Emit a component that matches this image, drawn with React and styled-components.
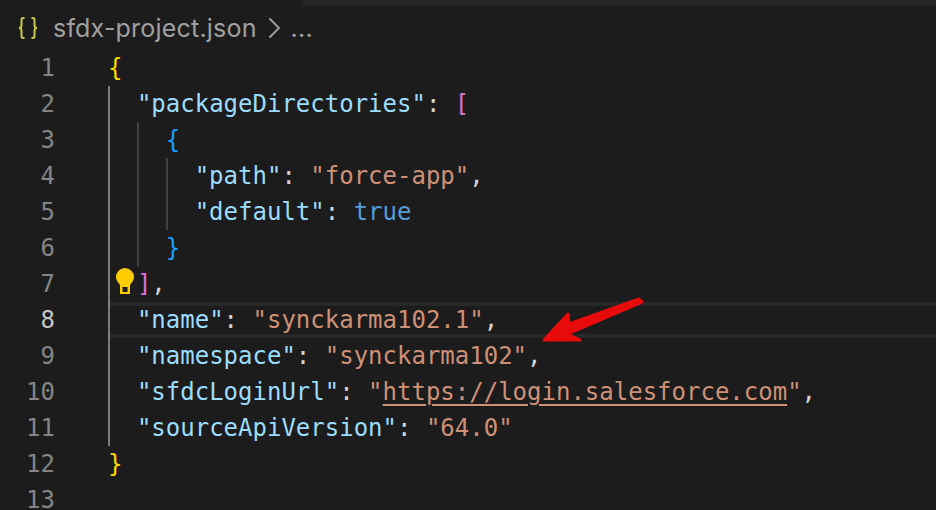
import styled, { createGlobalStyle } from "styled-components";

const GlobalStyle = createGlobalStyle`
  html, body {
    margin: 0;
    padding: 0;
    background: #1c1c1c;
  }
`;

const Editor = styled.div`
  position: relative;
  width: 936px;
  height: 510px;
  overflow: hidden;
  background: #1c1c1c;
`;

const TopStrip = styled.div`
  height: 6px;
  margin-left: 302px;
  background: #252525;
`;

const Breadcrumbs = styled.div`
  height: 44px;
  display: flex;
  align-items: center;
  padding-left: 17px;
  box-sizing: border-box;
  font-family: "Inter", "Liberation Sans", sans-serif;
  font-size: 25px;
  letter-spacing: 0.2px;
  color: #a0a0a0;
`;

const FileIcon = styled.svg`
  width: 22px;
  height: 24px;
  margin-right: 14px;
  flex: none;
`;

const Chevron = styled.svg`
  width: 13px;
  height: 22px;
  margin: 0 10px 0 11px;
  flex: none;
`;

const CodeArea = styled.div`
  font-family: "DejaVu Sans Mono", monospace;
  font-size: 24px;
  color: #d4d4d4;
`;

const Row = styled.div`
  display: flex;
  height: 36px;
  line-height: 36px;
  white-space: pre;
`;

const LineNumber = styled.div`
  width: 55px;
  margin-right: 53px;
  flex: none;
  text-align: right;
  color: ${(p) => (p.$active ? "#c6c6c6" : "#858585")};
`;

const Content = styled.div`
  position: relative;
  flex: 1;
  display: flex;
  box-sizing: border-box;
  ${(p) => p.$active && "box-shadow: inset 0 4px 0 #282828, inset 0 -4px 0 #282828;"}
`;

const Guide = styled.span`
  width: 28.9px;
  height: 36px;
  flex: none;
  box-sizing: border-box;
  border-left: 2px solid ${(p) => (p.$strong ? "#7c7c7c" : "#414141")};
`;

const Key = styled.span`
  color: #9cdcfe;
`;
const Str = styled.span`
  color: #ce9178;
`;
const Link = styled.span`
  text-decoration: underline;
  text-decoration-thickness: 2px;
  text-underline-offset: 4px;
`;
const Bool = styled.span`
  color: #569cd6;
`;
const Bracket = styled.span`
  color: ${(p) => p.$color};
`;

const Bulb = styled.svg`
  position: absolute;
  left: 8px;
  top: 2px;
  width: 18px;
  height: 26px;
`;

const Arrow = styled.svg`
  position: absolute;
  left: 535px;
  top: 292px;
  width: 115px;
  height: 56px;
`;

const Gold = "#ffd700";
const Blue = "#179fff";
const Orchid = "#da70d6";

const lines = [
  { guides: 0, body: <Bracket $color={Gold}>{"{"}</Bracket> },
  {
    guides: 1,
    body: (
      <>
        <Key>"packageDirectories"</Key>: <Bracket $color={Orchid}>[</Bracket>
      </>
    ),
  },
  { guides: 2, body: <Bracket $color={Blue}>{"{"}</Bracket> },
  {
    guides: 3,
    body: (
      <>
        <Key>"path"</Key>: <Str>"force-app"</Str>,
      </>
    ),
  },
  {
    guides: 3,
    body: (
      <>
        <Key>"default"</Key>: <Bool>true</Bool>
      </>
    ),
  },
  { guides: 2, body: <Bracket $color={Blue}>{"}"}</Bracket> },
  {
    guides: 1,
    bulb: true,
    body: (
      <>
        <Bracket $color={Orchid}>]</Bracket>,
      </>
    ),
  },
  {
    guides: 1,
    active: true,
    body: (
      <>
        <Key>"name"</Key>: <Str>"synckarma102.1"</Str>,
      </>
    ),
  },
  {
    guides: 1,
    body: (
      <>
        <Key>"namespace"</Key>: <Str>"synckarma102"</Str>,
      </>
    ),
  },
  {
    guides: 1,
    body: (
      <>
        <Key>"sfdcLoginUrl"</Key>:{" "}
        <Str>
          "<Link>https://login.salesforce.com</Link>"
        </Str>
        ,
      </>
    ),
  },
  {
    guides: 1,
    body: (
      <>
        <Key>"sourceApiVersion"</Key>: <Str>"64.0"</Str>
      </>
    ),
  },
  { guides: 0, body: <Bracket $color={Gold}>{"}"}</Bracket> },
  { guides: 0, body: null },
];

export default function App() {
  return (
    <Editor>
      <GlobalStyle />
      <TopStrip />
      <Breadcrumbs>
        <FileIcon viewBox="0 0 22 24" fill="none" stroke="#cbcb41" strokeWidth="2">
          <path d="M7.500 2H6.500Q4.500 2 4.500 4V9Q4.500 12 2 12Q4.500 12 4.500 15V20Q4.500 22 6.500 22H7.500" />
          <path d="M14.500 2H15.500Q17.500 2 17.500 4V9Q17.500 12 20 12Q17.500 12 17.500 15V20Q17.500 22 15.500 22H14.500" />
        </FileIcon>
        sfdx-project.json
        <Chevron viewBox="0 0 13 22" fill="none" stroke="#a0a0a0" strokeWidth="1.8">
          <path d="M1.500 1.500L11 11 1.500 20.500" />
        </Chevron>
        ...
      </Breadcrumbs>
      <CodeArea>
        {lines.map((line, i) => (
          <Row key={i}>
            <LineNumber $active={line.active}>{i + 1}</LineNumber>
            <Content $active={line.active}>
              {Array.from({ length: line.guides }, (_, g) => (
                <Guide key={g} $strong={g === 0} />
              ))}
              {line.bulb && (
                <Bulb viewBox="0 0 18 26">
                  <path
                    d="M9 0a9 9 0 0 0-9 9c0 3 1.600 4.800 3 6.500.8 1 1 2 1 3V26h10v-7.500c0-1 .2-2 1-3 1.400-1.700 3-3.500 3-6.500a9 9 0 0 0-9-9z"
                    fill="#ffcc00"
                  />
                  <rect x="6.500" y="19" width="5" height="5" fill="#1c1c1c" />
                </Bulb>
              )}
              {line.body}
            </Content>
          </Row>
        ))}
      </CodeArea>
      <Arrow viewBox="0 0 115 56" fill="#e90b0b" stroke="#e90b0b" strokeWidth="3" strokeLinejoin="round">
        <path d="M9 48L33 22 34 32 104 7 107 10 32 42 45 48z" />
      </Arrow>
    </Editor>
  );
}
